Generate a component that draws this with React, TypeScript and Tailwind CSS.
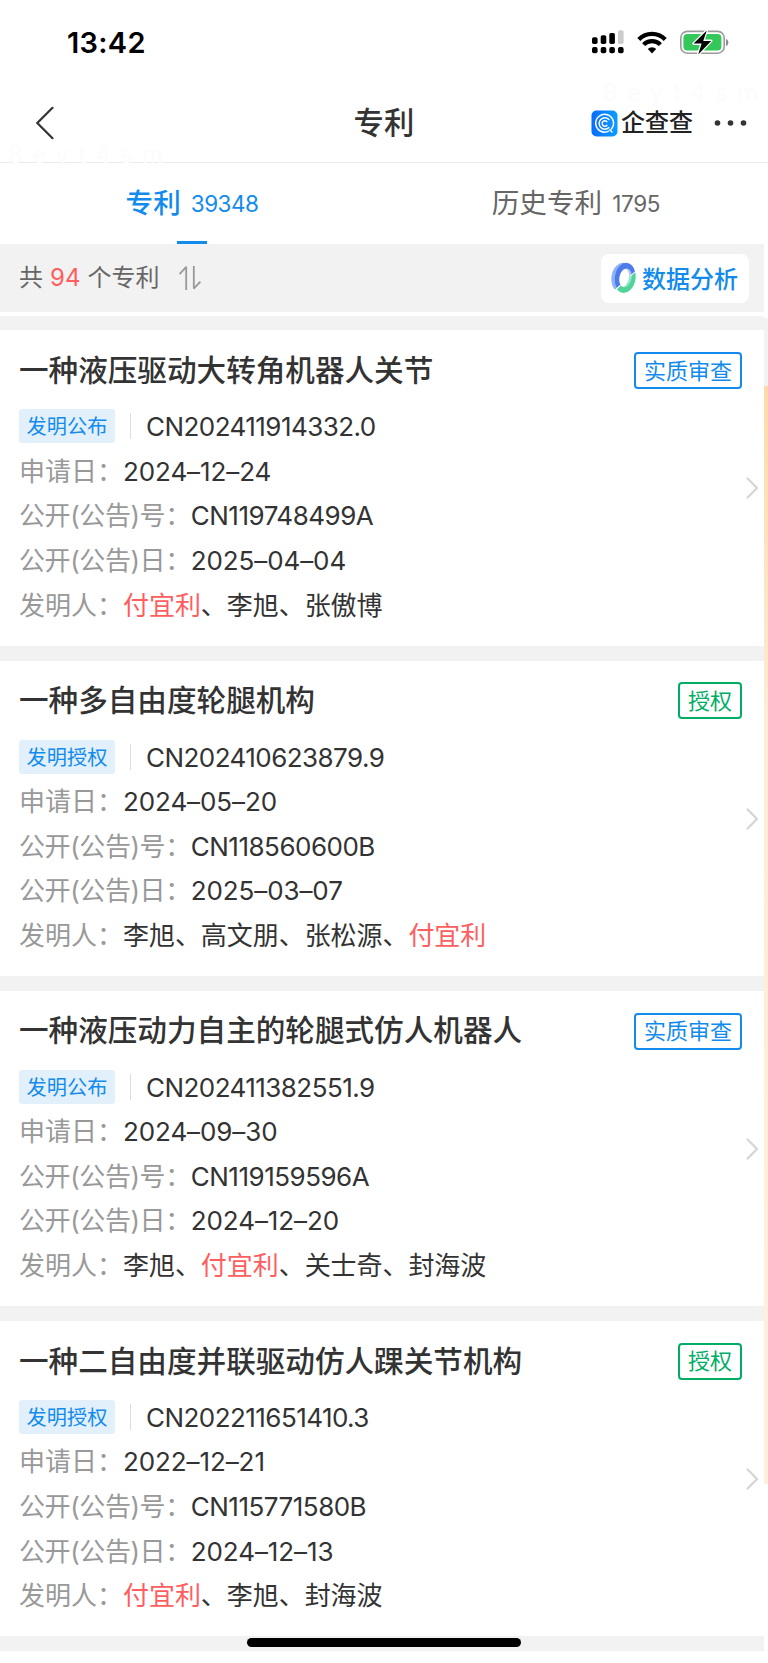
interface Patent {
  title: string;
  status: string;
  granted: boolean;
  kind: string;
  applyNo: string;
  applyDate: string;
  publishNo: string;
  publishDate: string;
  inventors: string[];
}

const KEYWORD = '付宜利';

const patents: Patent[] = [
  {
    title: '一种液压驱动大转角机器人关节',
    status: '实质审查',
    granted: false,
    kind: '发明公布',
    applyNo: 'CN202411914332.0',
    applyDate: '2024–12–24',
    publishNo: 'CN119748499A',
    publishDate: '2025–04–04',
    inventors: ['付宜利', '李旭', '张傲博'],
  },
  {
    title: '一种多自由度轮腿机构',
    status: '授权',
    granted: true,
    kind: '发明授权',
    applyNo: 'CN202410623879.9',
    applyDate: '2024–05–20',
    publishNo: 'CN118560600B',
    publishDate: '2025–03–07',
    inventors: ['李旭', '高文朋', '张松源', '付宜利'],
  },
  {
    title: '一种液压动力自主的轮腿式仿人机器人',
    status: '实质审查',
    granted: false,
    kind: '发明公布',
    applyNo: 'CN202411382551.9',
    applyDate: '2024–09–30',
    publishNo: 'CN119159596A',
    publishDate: '2024–12–20',
    inventors: ['李旭', '付宜利', '关士奇', '封海波'],
  },
  {
    title: '一种二自由度并联驱动仿人踝关节机构',
    status: '授权',
    granted: true,
    kind: '发明授权',
    applyNo: 'CN202211651410.3',
    applyDate: '2022–12–21',
    publishNo: 'CN115771580B',
    publishDate: '2024–12–13',
    inventors: ['付宜利', '李旭', '封海波'],
  },
];

function SignalIcon() {
  return (
    <svg width="32" height="24" viewBox="0 0 32 24">
      <rect x="0" y="7.3" width="5.6" height="6.7" rx="1.8" />
      <rect x="8.7" y="5.3" width="5.6" height="8.7" rx="1.8" />
      <rect x="17.3" y="3" width="5.6" height="11" rx="1.8" />
      <rect x="26" y="0.3" width="5.6" height="13.7" rx="1.8" fill="#cccccc" />
      <rect x="0" y="17" width="5.6" height="6.2" rx="2" />
      <rect x="8.7" y="17" width="5.6" height="6.2" rx="2" />
      <rect x="17.3" y="17" width="5.6" height="6.2" rx="2" />
      <rect x="26" y="17" width="5.6" height="6.2" rx="2" />
    </svg>
  );
}

function WifiIcon() {
  return (
    <svg width="30" height="23" viewBox="0 0 30 23" fill="none" stroke="#000" strokeWidth="4.2">
      <path d="M1.8 8.4a18.6 18.6 0 0 1 26.4 0" />
      <path d="M6.6 13.6a11.8 11.8 0 0 1 16.8 0" />
      <path d="M10.8 18a6 6 0 0 1 8.4 0L15 22.4z" fill="#000" stroke="none" />
    </svg>
  );
}

function BatteryIcon() {
  return (
    <svg width="50" height="25" viewBox="0 0 50 25">
      <rect x="0.8" y="1.4" width="43.4" height="21.8" rx="6.5" fill="none" stroke="#9b9b9b" strokeWidth="1.6" />
      <path d="M46 9c3.2 1 3.2 6 0 7z" fill="#8d8d8d" />
      <rect x="3.4" y="4.1" width="38" height="16.4" rx="4" fill="#34c759" />
      <path
        d="M26.8 0.4 13.6 13.6h8L18.2 24.4 31.2 10.9h-8z"
        fill="#000"
        stroke="#fff"
        strokeWidth="2.6"
        paintOrder="stroke"
        strokeLinejoin="round"
      />
    </svg>
  );
}

function QccLogo() {
  return (
    <svg width="27" height="27" viewBox="0 0 27 27" fill="none">
      <defs>
        <linearGradient id="qcc" x1="0" y1="0" x2="1" y2="0">
          <stop offset="0" stopColor="#0a6cff" />
          <stop offset="1" stopColor="#0b9dff" />
        </linearGradient>
      </defs>
      <rect x="0.5" y="0.5" width="26" height="26" rx="5" fill="url(#qcc)" />
      <g stroke="#fff" strokeWidth="1.5" strokeLinecap="round">
        <path d="M17.6 21.2a8.9 8.9 0 1 1 2.8-2.2" />
        <path d="M18.8 19.8l2.2 2.2" />
        <path d="M17.8 9.4a5.7 5.7 0 1 0 0 8.2" />
        <path d="M15.8 11.6a2.7 2.7 0 1 0 0 3.8" />
      </g>
    </svg>
  );
}

function SortIcon() {
  return (
    <svg width="24" height="26" viewBox="0 0 24 26" fill="none" stroke="#999999" strokeWidth="1.8">
      <path d="M1.6 9.2 8.2 1.8V25" strokeLinejoin="bevel" />
      <path d="M15.8 1v22.6L22.4 16.6" strokeLinejoin="bevel" />
    </svg>
  );
}

// Tilted donut: a blue and a green half, each with a lighter side face
function AnalysisIcon() {
  return (
    <svg width="25" height="32" viewBox="0 0 25 32" fill="none">
      <defs>
        <clipPath id="upper">
          <path d="M-2-2h29v9.500L3 28.500-2 32z" />
        </clipPath>
        <clipPath id="lower">
          <path d="M27 8 4 29v5h23z" />
        </clipPath>
        <clipPath id="hole">
          <ellipse cx="14.5" cy="15.800" rx="6" ry="9.500" transform="rotate(12 14.5 15.8)" />
        </clipPath>
      </defs>
      <g clipPath="url(#upper)">
        <ellipse cx="11.3" cy="15.8" rx="10.900" ry="15.200" fill="#8fb2fa" transform="rotate(8 11.300 15.8)" />
        <ellipse cx="14.2" cy="15.8" rx="10.300" ry="15" fill="#4e7bea" transform="rotate(8 14.200 15.8)" />
      </g>
      <g clipPath="url(#lower)">
        <ellipse cx="13.7" cy="15.8" rx="10.900" ry="15.200" fill="#50d498" transform="rotate(8 13.700 15.8)" />
      </g>
      <g clipPath="url(#hole)">
        <path d="M0 0h25v32H0z" fill="#b3c6f3" />
        <path d="M25 8 4 27v5h21z" fill="#8ae9c0" />
        <ellipse cx="12" cy="15.8" rx="6" ry="9.500" fill="#fff" transform="rotate(12 12 15.8)" />
      </g>
      <path d="M24.500 9.300 19 14.300M9 23.500 4 28" stroke="#fff" strokeWidth="1" />
    </svg>
  );
}

function StatusBar() {
  return (
    <div className="flex h-[84px] items-center justify-between pl-[67px] pr-[38px] text-[29px] font-semibold text-black">
      <span className="pt-0.5 tracking-[0.3px]">13:42</span>
      <div className="flex items-center gap-[13px]">
        <SignalIcon />
        <WifiIcon />
        <BatteryIcon />
      </div>
    </div>
  );
}

function NavBar() {
  return (
    <div className="flex h-[79px] items-center border-b border-[#ececec] px-[21px]">
      <div className="flex flex-1 items-center">
        <svg className="ml-[15px]" width="18" height="34" viewBox="0 0 18 34" fill="none" stroke="#333" strokeWidth="2.2" strokeLinecap="round">
          <path d="M16.5 1.8 1.3 17l15.2 15.2" />
        </svg>
      </div>
      <h1 className="pt-0.5 text-[30.4px] font-medium text-[#333]">专利</h1>
      <div className="flex flex-1 items-center justify-end">
        <QccLogo />
        <span className="ml-[3px] text-[24px] font-medium text-[#222]">企查查</span>
        <svg className="ml-[21px]" width="33" height="8" viewBox="0 0 33 8" fill="#333">
          <circle cx="3.5" cy="4" r="2.8" />
          <circle cx="16.5" cy="4" r="2.8" />
          <circle cx="29.5" cy="4" r="2.8" />
        </svg>
      </div>
    </div>
  );
}

function Tabs() {
  return (
    <div className="flex h-[81px] text-[27.6px]">
      <div className="flex flex-1 flex-col items-center text-[#128bed]">
        <div className="flex flex-1 items-center gap-[10px] pt-1">
          <span className="font-medium">专利</span>
          <span className="text-[22.5px] tracking-[-0.5px]">39348</span>
        </div>
        <div className="h-[3px] w-[30px] bg-[#128bed]" />
      </div>
      <div className="flex flex-1 flex-col items-center text-[#666]">
        <div className="flex flex-1 items-center gap-[10px] pt-1">
          <span>历史专利</span>
          <span className="text-[22.5px] tracking-[-0.3px]">1795</span>
        </div>
        <div className="h-[3px]" />
      </div>
    </div>
  );
}

function Summary() {
  return (
    <div className="flex h-[68px] items-center bg-[#f2f2f2] pl-[19px] pr-[15px] text-[24px] text-[#666]">
      <span>共</span>
      <span className="mx-[7px] text-[#ff5e5e]">94</span>
      <span>个专利</span>
      <span className="ml-[19px]">
        <SortIcon />
      </span>
      <button className="ml-auto flex h-[49px] w-[148px] items-center gap-[6px] rounded-lg bg-white pl-[10px] font-medium text-[#128bed]">
        <AnalysisIcon />
        <span className="pt-[3px]">数据分析</span>
      </button>
    </div>
  );
}

function Field({ label, value }: { label: string; value: React.ReactNode }) {
  return (
    <div className="flex h-[44.6px] items-center">
      <span className={label.includes('(') ? 'tracking-[-0.4px] text-[#999]' : 'text-[#999]'}>{label}</span>
      <span className="text-[#333]">{value}</span>
    </div>
  );
}

function PatentCard({ patent }: { patent: Patent }) {
  return (
    <div className="flex h-[315.2px] items-center bg-white pl-[19px] pr-[5px] text-[26px]">
      <div className="h-full flex-1 pt-[6px]">
        <div className="flex h-[67.6px] items-center justify-between pr-1">
          <h2 className="text-[29.6px] font-medium text-[#333]">{patent.title}</h2>
          <span
            className={`mt-px rounded border-2 px-2 py-[0.5px] text-[22px] leading-8 ${
              patent.granted ? 'border-[#00ad65] text-[#00ad65]' : 'border-[#128bed] text-[#128bed]'
            }`}
          >
            {patent.status}
          </span>
        </div>
        <div className="flex h-[45px] items-center">
          <span className="flex h-[34px] w-[96px] items-center justify-center rounded-[3px] bg-[#e2f0fc] pt-0.5 text-[20.2px] text-[#128bed]">
            {patent.kind}
          </span>
          <span className="ml-[15px] mr-[15px] h-[26px] w-px bg-[#dddddd]" />
          <span className="pt-px tracking-[-0.55px] text-[#333]">{patent.applyNo}</span>
        </div>
        <Field label="申请日：" value={<span className="tracking-[-0.1px]">{patent.applyDate}</span>} />
        <Field label="公开(公告)号：" value={<span className="tracking-[-0.5px]">{patent.publishNo}</span>} />
        <Field label="公开(公告)日：" value={<span className="tracking-[-0.1px]">{patent.publishDate}</span>} />
        <Field
          label="发明人："
          value={patent.inventors.map((name, i) => (
            <span key={name} className="tracking-[-0.06px]">
              {i > 0 && '、'}
              <span className={name === KEYWORD ? 'text-[#ff5e5e]' : ''}>{name}</span>
            </span>
          ))}
        />
      </div>
      <svg className="mt-px" width="13" height="24" viewBox="0 0 13 24" fill="none" stroke="#d6d6d6" strokeWidth="2.4" strokeLinecap="round" strokeLinejoin="round">
        <path d="M1.600 2.500 11 12 1.600 21.500" />
      </svg>
    </div>
  );
}

export default function App() {
  return (
    <div className="relative h-[1663px] w-[768px] overflow-hidden bg-white font-[Inter,'Noto_Sans_CJK_SC',sans-serif]">
      <StatusBar />
      <NavBar />
      <Tabs />
      <div className="flex">
        <div className="w-[764px]">
          <Summary />
          <div className="mt-1 flex flex-col gap-[15px] bg-[#f2f2f2] pt-[14.4px] pb-[15px]">
            {patents.map((patent) => (
              <PatentCard key={patent.applyNo} patent={patent} />
            ))}
          </div>
        </div>
        {/* page edge showing the scroll track */}
        <div className="flex w-1 flex-col pt-[74px]">
          <div className="h-[68px] bg-[#f2f2f2]" />
          <div className="h-[1098px] bg-linear-to-b from-[#ffd9a8] via-[#ffecd5] via-30% to-[#fff0de]" />
        </div>
      </div>

      <span className="absolute left-2 top-[141px] text-[24px] leading-7 tracking-[9.4px] text-[#fcfcfc]">8eyt4sm</span>
      <span className="absolute left-[603px] top-[79px] text-[24px] leading-7 tracking-[9.4px] text-[#fcfcfc]">8eyt4sm</span>
      <div className="absolute left-[247px] top-[1638px] h-[9px] w-[274px] rounded-full bg-black" />
    </div>
  );
}
